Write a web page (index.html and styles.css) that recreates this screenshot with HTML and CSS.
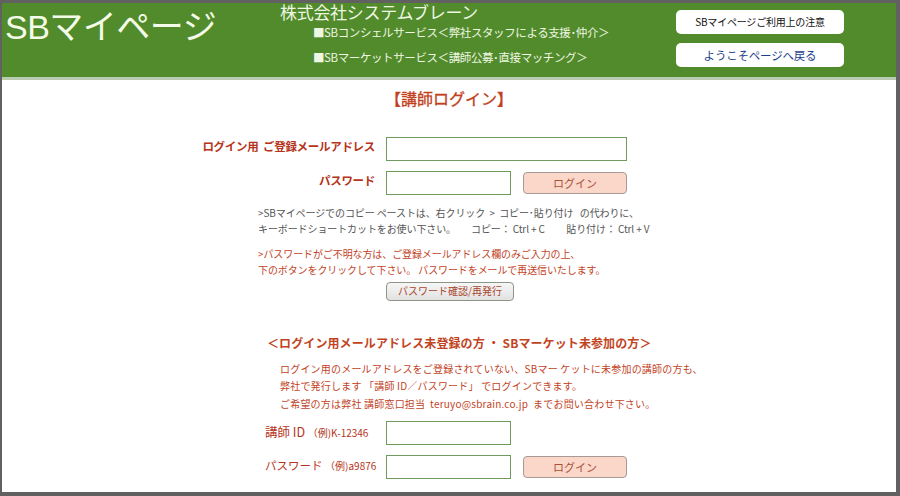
FILE: index.html
```html
<!DOCTYPE html>
<html lang="ja">
<head>
    <meta charset="UTF-8">
    <title>SBマイページ 講師ログイン</title>
    <link rel="stylesheet" href="styles.css">
</head>
<body>
    <div class="frame">
        <!-- Header -->
        <div class="header">
            <div class="logo">SBマイページ</div>
            <div class="company">
                <div class="company-name">株式会社システムブレーン</div>
                <div class="service">■SBコンシェルサービス＜弊社スタッフによる支援･仲介＞</div>
                <div class="service second">■SBマーケットサービス＜講師公募･直接マッチング＞</div>
            </div>
            <div class="header-links">
                <a class="header-btn" href="#">SBマイページご利用上の注意</a>
                <a class="header-btn back" href="#">ようこそページへ戻る</a>
            </div>
        </div>

        <!-- Login -->
        <div class="content">
            <h1 class="page-title">【講師ログイン】</h1>

            <div class="form-grid">
                <label class="label">ログイン用&nbsp; ご登録メールアドレス</label>
                <div class="field-row"><input class="input wide" type="text"></div>

                <label class="label">パスワード</label>
                <div class="field-row">
                    <input class="input" type="password">
                    <button class="login-btn">ログイン</button>
                </div>
            </div>

            <div class="notes">
                <p class="note">&gt;SBマイページでのコピー ペーストは、右クリック &nbsp;&gt;&nbsp; コピー･貼り付け&nbsp;&nbsp; の代わりに、<br>キーボードショートカットをお使い下さい。&nbsp;&nbsp;&nbsp;&nbsp;&nbsp;&nbsp; コピー： Ctrl + C &nbsp;&nbsp;&nbsp;&nbsp;&nbsp;&nbsp;&nbsp;&nbsp; 貼り付け： Ctrl + V</p>
                <p class="note red">&gt;パスワードがご不明な方は、ご登録メールアドレス欄のみご入力の上、<br>下のボタンをクリックして下さい。 パスワードをメールで再送信いたします。</p>
            </div>
            <div class="reissue-row">
                <button class="reissue-btn">パスワード確認/再発行</button>
            </div>

            <!-- No email registered -->
            <h2 class="sub-title">＜ログイン用メールアドレス未登録の方 ・ SBマーケット未参加の方＞</h2>
            <p class="info">ログイン用のメールアドレスをご登録されていない、SBマー ケットに未参加の講師の方も、<br>弊社で発行します 「講師 ID／パスワード」 でログインできます。<br>ご希望の方は弊社 講師窓口担当&nbsp; teruyo@sbrain.co.jp&nbsp; までお問い合わせ下さい。</p>

            <div class="id-grid">
                <label class="id-label"><span class="strong">講師 ID</span> <small>（例)K-12346</small></label>
                <div class="field-row"><input class="input" type="text"></div>

                <label class="id-label">パスワード <small>（例)a9876</small></label>
                <div class="field-row">
                    <input class="input" type="password">
                    <button class="login-btn">ログイン</button>
                </div>
            </div>
        </div>
    </div>
</body>
</html>
```

FILE: styles.css
```css
/* General */
body {
    margin: 0;
    font-family: "Noto Sans CJK JP", "Noto Sans", sans-serif;
    background: #ffffff;
}

.frame {
    height: 496px;
    box-sizing: border-box;
    border-style: solid;
    border-color: #616161;
    border-width: 3px 4px 4px 2px;
    overflow: hidden;
    background: #ffffff;
}

/* Header */
.header {
    display: flex;
    height: 74px;
    background-color: #528b2b;
    border-bottom: 3px solid #b9cbb1;
}

.logo {
    width: 275px;
    padding: 3px 0 0 3px;
    font-family: "Liberation Sans", "Noto Sans CJK JP", sans-serif;
    font-size: 34px;
    line-height: 42px;
    color: #f4fbe8;
    letter-spacing: -0.5px;
}

.company {
    width: 390px;
    color: #eef7e2;
}

.company-name {
    font-size: 17px;
    line-height: 18px;
    letter-spacing: -0.3px;
}

.service {
    margin-left: 33px;
    font-size: 11.5px;
    line-height: 22px;
    letter-spacing: -0.4px;
}

.service.second {
    line-height: 28px;
}

.header-links {
    display: flex;
    flex-direction: column;
    gap: 9px;
    padding-top: 7px;
    margin-left: 6px;
}

.header-btn {
    display: block;
    width: 168px;
    height: 24px;
    line-height: 24px;
    background: #ffffff;
    border-radius: 5px;
    text-align: center;
    text-decoration: none;
    color: #111111;
    font-size: 10px;
    letter-spacing: -0.2px;
}

.header-btn.back {
    color: #1d3f8c;
    font-size: 11.5px;
}

/* Content */
.content {
    padding-top: 6px;
}

.page-title {
    margin: 0 0 27px;
    text-align: center;
    font-size: 16px;
    line-height: 24px;
    font-weight: normal;
    color: #c2401c;
    -webkit-text-stroke: 0.3px #c2401c;
}

.form-grid {
    display: grid;
    grid-template-columns: 373px auto;
    column-gap: 11px;
    row-gap: 10px;
    align-items: center;
}

.label {
    text-align: right;
    font-size: 11.5px;
    font-weight: bold;
    color: #b5341b;
    letter-spacing: -0.3px;
    padding-bottom: 6px;
}

.field-row {
    display: flex;
    align-items: center;
    gap: 12px;
}

.input {
    width: 125px;
    height: 24px;
    box-sizing: border-box;
    border: 1px solid #6f9b5e;
    padding: 2px 4px;
    background: #ffffff;
    margin: 0;
}

.input.wide {
    width: 241px;
}

.login-btn {
    width: 104px;
    height: 22px;
    background: #fbd7ca;
    border: 1px solid #a69a96;
    border-radius: 4px;
    font-family: inherit;
    font-size: 11px;
    color: #a85038;
    padding: 0;
}

/* Notes */
.notes {
    margin: 10px 0 0 256px;
}

.note {
    margin: 0;
    font-size: 10px;
    line-height: 16px;
    color: #555555;
    letter-spacing: -0.1px;
}

.note.red {
    margin-top: 9px;
    color: #c2441f;
}

.reissue-row {
    padding-left: 384px;
    margin-top: -2px;
}

.reissue-btn {
    width: 128px;
    height: 19px;
    background: linear-gradient(#f6f6f6, #e2e2e2);
    border: 1px solid #8d9488;
    border-radius: 4px;
    font-family: inherit;
    font-size: 10px;
    line-height: 16px;
    color: #a8452a;
    padding: 0;
}

.sub-title {
    margin: 32px 0 7px 265px;
    font-size: 12px;
    line-height: 20px;
    font-weight: bold;
    color: #c2441f;
    letter-spacing: 0.1px;
}

.info {
    margin: 0 0 9px 278px;
    font-size: 10px;
    line-height: 17.5px;
    color: #c2441f;
    letter-spacing: 0.2px;
}

.id-grid {
    display: grid;
    grid-template-columns: 121px auto;
    row-gap: 10px;
    align-items: center;
    padding-left: 263px;
}

.id-label {
    font-size: 11.5px;
    color: #b5341b;
    padding-bottom: 4px;
}

.id-label .strong {
    font-size: 12.5px;
}

.id-label small {
    font-size: 10px;
    color: #b5341b;
}
```
